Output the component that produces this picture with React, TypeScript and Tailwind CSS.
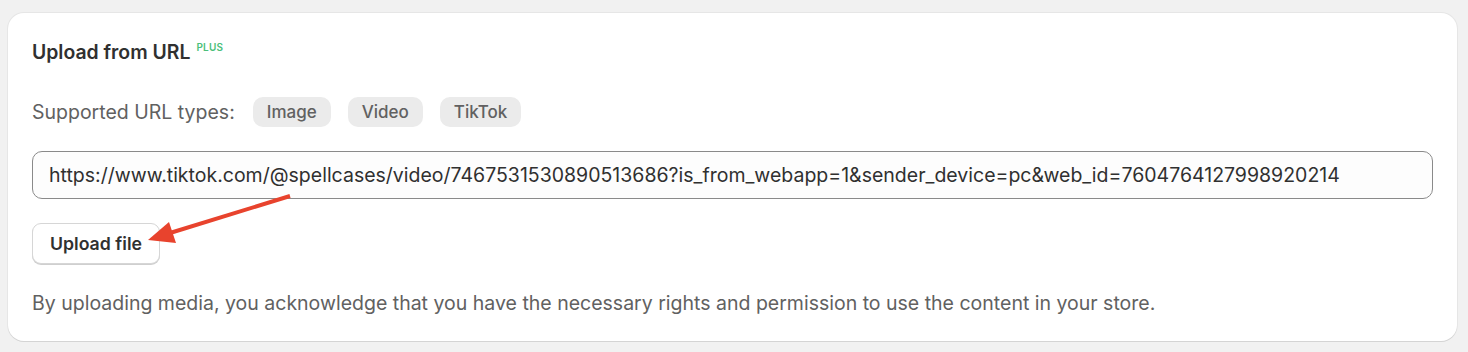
import React from "react";

const FONT = { fontFamily: "Inter, 'Noto Sans', sans-serif" };

const URL_VALUE =
  "https://www.tiktok.com/@spellcases/video/7467531530890513686?is_from_webapp=1&sender_device=pc&web_id=7604764127998920214";

function Chip({ label }: { label: string }) {
  return (
    <span className="inline-flex h-[30px] items-center rounded-[10px] bg-[#ebebeb] px-[14px] text-[17px] font-medium leading-[20px] text-[#616161]">
      {label}
    </span>
  );
}

export default function App() {
  return (
    <div className="min-h-[352px] w-full bg-[#f1f1f1] pl-[8px] pr-[11px] pt-[13px] pb-[9px]" style={FONT}>
      <div className="relative rounded-[16px] bg-white px-[24px] pt-[29px] pb-[26px] shadow-[0_1px_0_0_#d4d4d4,0_0_0_1px_#e6e6e6]">
        {/* Title */}
        <div className="flex items-start">
          <h2 className="text-[19.4px] font-semibold leading-[20px] text-[#303030]">Upload from URL</h2>
          <span className="ml-[6px] -mt-[1px] text-[10px] font-semibold leading-[12px] tracking-wide text-[#4cbf7a]">PLUS</span>
        </div>

        {/* Supported types */}
        <div className="mt-[35px] flex items-center gap-[17px]">
          <span className="mr-[1px] text-[19.5px] leading-[24px] text-[#616161]">Supported URL types:</span>
          <Chip label="Image" />
          <Chip label="Video" />
          <Chip label="TikTok" />
        </div>

        {/* URL input */}
        <div className="mt-[24px] flex h-[48px] items-center rounded-[10px] border border-[#8a8a8a] bg-[#fdfdfd] px-[16px]">
          <span className="truncate text-[19.5px] leading-[24px] text-[#303030]">{URL_VALUE}</span>
        </div>

        {/* Upload button */}
        <button className="mt-[24px] flex h-[41px] w-[128px] items-center justify-center rounded-[9px] border border-[#d6d6d6] bg-white text-[17.7px] font-semibold leading-[20px] text-[#303030] shadow-[0_1px_0_0_#cfcfcf]">
          Upload file
        </button>

        <p className="mt-[27px] text-[19.5px] leading-[24px] text-[#616161]">
          By uploading media, you acknowledge that you have the necessary rights and permission to use the content in your store.
        </p>

        {/* Annotation arrow */}
        <svg className="pointer-events-none absolute left-0 top-0" width="320" height="260" viewBox="0 0 320 260">
          <line x1="282" y1="183" x2="162" y2="220" stroke="#e8432d" strokeWidth="4" strokeLinecap="butt" />
          <polygon points="140,227 161,209 168,230" fill="#e8432d" />
        </svg>
      </div>
    </div>
  );
}
